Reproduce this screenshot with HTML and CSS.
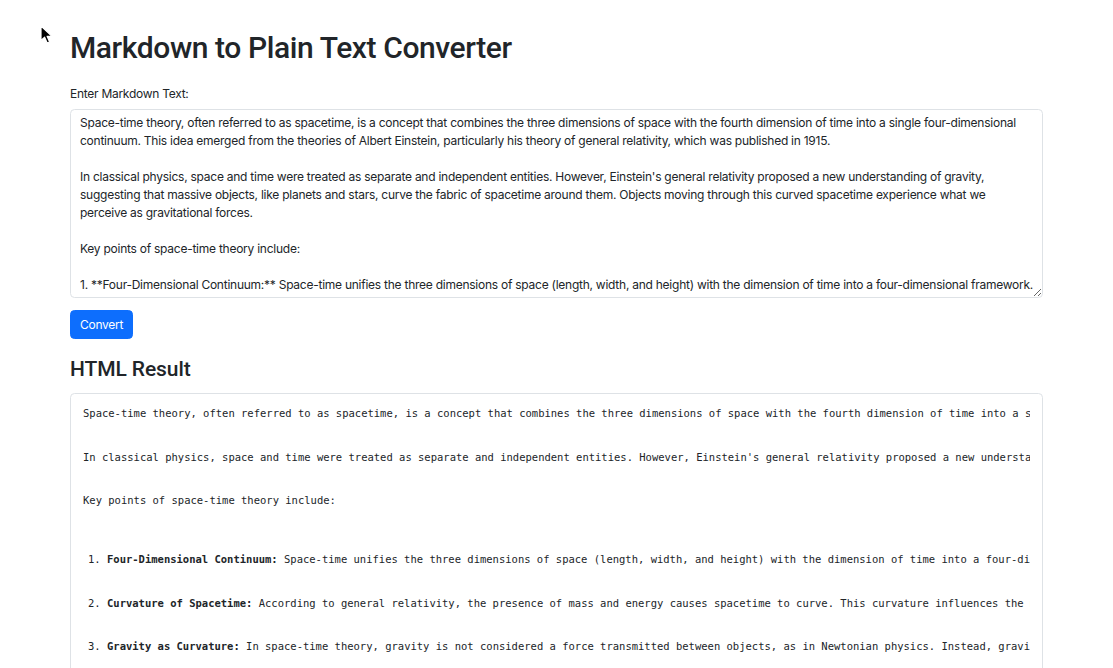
FILE: index.html
```html
<!DOCTYPE html>
<html lang="en">
<head>
<meta charset="utf-8">
<title>Markdown to Plain Text Converter</title>
<link rel="stylesheet" href="styles.css">
</head>
<body>
<svg class="cursor" width="14" height="20" viewBox="0 0 14 20" aria-hidden="true"><path d="M1 1 L1 15.5 L4.6 12.2 L7.2 18 L9.6 17 L7.1 11.3 L12 11.3 Z" fill="#000" stroke="#fff" stroke-width="1.2" stroke-linejoin="round"/></svg>
<main class="container">
  <h1 class="title">Markdown to Plain Text Converter</h1>
  <div class="field">
    <label for="markdown" class="label">Enter Markdown Text:</label>
    <textarea id="markdown" class="input" spellcheck="false">Space-time theory, often referred to as spacetime, is a concept that combines the three dimensions of space with the fourth dimension of time into a single four-dimensional
continuum. This idea emerged from the theories of Albert Einstein, particularly his theory of general relativity, which was published in 1915.

In classical physics, space and time were treated as separate and independent entities. However, Einstein's general relativity proposed a new understanding of gravity,
suggesting that massive objects, like planets and stars, curve the fabric of spacetime around them. Objects moving through this curved spacetime experience what we
perceive as gravitational forces.

Key points of space-time theory include:

1. **Four-Dimensional Continuum:** Space-time unifies the three dimensions of space (length, width, and height) with the dimension of time into a four-dimensional framework.

2. **Curvature of Spacetime:** According to general relativity, the presence of mass and energy causes spacetime to curve. This curvature influences the motion of
objects and the path of light.

3. **Gravity as Curvature:** In space-time theory, gravity is not considered a force transmitted between objects, as in Newtonian physics. Instead, gravity is the
result of objects following the curved paths of spacetime.</textarea>
  </div>
  <button type="button" class="btn">Convert</button>
  <h2 class="subtitle">HTML Result</h2>
  <div class="result">
    <pre class="output"><p>Space-time theory, often referred to as spacetime, is a concept that combines the three dimensions of space with the fourth dimension of time into a single four-dimensional continuum. This idea emerged from the theories of Albert Einstein, particularly his theory of general relativity, which was published in 1915.</p>
<p>In classical physics, space and time were treated as separate and independent entities. However, Einstein's general relativity proposed a new understanding of gravity, suggesting that massive objects, like planets and stars, curve the fabric of spacetime around them.</p>
<p>Key points of space-time theory include:</p>
<ol>
<li><p><strong>Four-Dimensional Continuum:</strong> Space-time unifies the three dimensions of space (length, width, and height) with the dimension of time into a four-dimensional framework.</p></li>
<li><p><strong>Curvature of Spacetime:</strong> According to general relativity, the presence of mass and energy causes spacetime to curve. This curvature influences the motion of objects and the path of light.</p></li>
<li><p><strong>Gravity as Curvature:</strong> In space-time theory, gravity is not considered a force transmitted between objects, as in Newtonian physics. Instead, gravity is the result of objects following the curved paths of spacetime.</p></li>
<li><p><strong>Time Dilation:</strong> Time passes at different rates depending on the strength of the gravitational field and the relative velocity of observers.</p></li>
</ol></pre>
  </div>
</main>
</body>
</html>
```

FILE: styles.css
```css
* {
  box-sizing: border-box;
}

html,
body {
  margin: 0;
  padding: 0;
  background: #fff;
}

body {
  font-family: Inter, "Liberation Sans", Arial, sans-serif;
  font-size: 12px;
  line-height: 1.5;
  letter-spacing: -0.27px;
  color: #212529;
  overflow: hidden;
}

.cursor {
  position: absolute;
  left: 40px;
  top: 25px;
}

.container {
  max-width: 991px;
  margin: 0 auto;
  padding: 30px 9px 0;
}

.title {
  margin: 0 0 19px;
  font-family: Roboto, Inter, sans-serif;
  font-size: 30px;
  font-weight: 500;
  line-height: 1.2;
  letter-spacing: -0.4px;
}

.field {
  display: flex;
  flex-direction: column;
}

.label {
  margin-bottom: 6px;
}

.input {
  display: block;
  width: 100%;
  height: 189px;
  padding: 3.5px 9px 4.5px;
  font-family: inherit;
  font-size: 12px;
  line-height: 1.5;
  letter-spacing: -0.25px;
  color: #212529;
  background: #fff;
  border: 1px solid #dee2e6;
  border-radius: 4.5px;
  white-space: pre;
  overflow: hidden;
  resize: vertical;
  outline: none;
}

.btn {
  display: inline-block;
  margin-top: 12px;
  padding: 4.5px 9px;
  font-family: inherit;
  font-size: 12px;
  line-height: 1.5;
  letter-spacing: -0.27px;
  color: #fff;
  background: #0d6efd;
  border: 1px solid #0d6efd;
  border-radius: 4.5px;
  cursor: pointer;
}

.subtitle {
  margin: 17.5px 0 11.5px;
  font-family: Roboto, Inter, sans-serif;
  font-size: 21px;
  font-weight: 500;
  line-height: 1.2;
  letter-spacing: -0.1px;
}

.result {
  padding: 12px;
  border: 1px solid #dee2e6;
  border-radius: 4.5px;
  height: 400px;
}

.output {
  margin: 0;
  font-family: "DejaVu Sans Mono", "Liberation Mono", monospace;
  font-size: 10.5px;
  line-height: 1.5;
  letter-spacing: 0;
  white-space: pre;
  overflow: hidden;
}

.output p {
  margin: 0 0 12px;
}

.output ol {
  margin: 0 0 12px;
  padding-left: 24px;
}

.output strong {
  font-weight: 700;
}
```
